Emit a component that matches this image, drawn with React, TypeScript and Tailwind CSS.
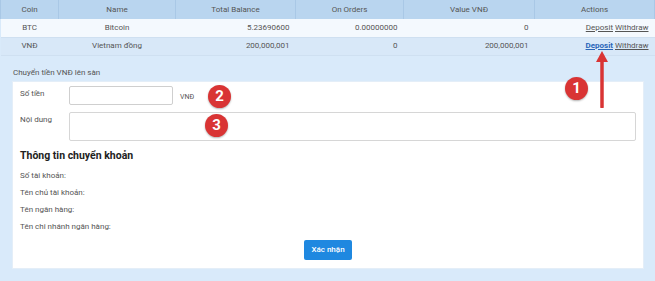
import { ReactNode } from 'react';

const cols = [
  { label: 'Coin', w: 'w-[58px]' },
  { label: 'Name', w: 'w-[117px]' },
  { label: 'Total Balance', w: 'w-[120px]' },
  { label: 'On Orders', w: 'w-[108px]' },
  { label: 'Value VNĐ', w: 'w-[131px]' },
  { label: 'Actions', w: '' },
];

const rows = [
  { coin: 'BTC', name: 'Bitcoin', total: '5.23690600', orders: '0.00000000', value: '0', active: false },
  { coin: 'VNĐ', name: 'Vietnam đồng', total: '200,000,001', orders: '0', value: '200,000,001', active: true },
];

const Badge = ({ n, className }: { n: number; className: string }) => (
  <div
    className={`absolute w-[23px] h-[23px] rounded-full bg-[#d93434] text-white text-[15px] font-bold flex items-center justify-center shadow-[0_1px_2px_rgba(0,0,0,0.3)] ${className}`}
  >
    {n}
  </div>
);

const Field = ({ label, children }: { label: string; children: ReactNode }) => (
  <div className="flex items-start">
    <div className="w-[49px] pt-[2px] text-[8px] text-[#555]">{label}</div>
    {children}
  </div>
);

export default function App() {
  return (
    <div className="relative w-[655px] h-[281px] bg-[#d9eafa] font-['Roboto',sans-serif] text-[#555] overflow-hidden">
      <table className="w-full border-collapse text-[8px] table-fixed">
        <thead>
          <tr className="bg-[#b9d5ef] h-[19px]">
            {cols.map((c) => (
              <th key={c.label} className={`${c.w} font-normal border-x border-[#a9c8e6] text-center`}>
                {c.label}
              </th>
            ))}
          </tr>
        </thead>
        <tbody>
          {rows.map((r) => (
            <tr key={r.coin} className={`h-[18px] border-b border-[#cfe0f1] ${r.active ? 'bg-[#d8e8f8]' : 'bg-[#f4f9fe]'}`}>
              <td className="text-center">{r.coin}</td>
              <td className="text-center">{r.name}</td>
              <td className="text-right pr-[6px]">{r.total}</td>
              <td className="text-right pr-[6px]">{r.orders}</td>
              <td className="text-right pr-[6px]">{r.value}</td>
              <td className="text-right pr-[6px]">
                <a className={`underline ${r.active ? 'text-[#2a66b8] font-bold' : 'text-[#555]'}`}>Deposit</a>{' '}
                <a className="underline text-[#555]">Withdraw</a>
              </td>
            </tr>
          ))}
        </tbody>
      </table>

      <div className="pl-[13px] pt-[11px] text-[8px] text-[#555]">Chuyển tiền VNĐ lên sàn</div>

      <div className="ml-[12px] mr-[11px] mt-[2px] h-[188px] bg-white border border-[#e4eef8] px-[7px] pt-[4px]">
        <Field label="Số tiền">
          <input className="w-[104px] h-[19px] border border-[#cfcfcf] rounded-[2px] outline-none" />
          <span className="ml-[7px] pt-[6px] text-[7px] text-[#555]">VNĐ</span>
        </Field>
        <div className="mt-[7px]">
          <Field label="Nội dung">
            <textarea className="w-[570px] h-[29px] border border-[#d6d6d6] rounded-[2px] resize-none outline-none" />
          </Field>
        </div>

        <div className="mt-[7px] text-[10.5px] leading-[16px] font-bold text-[#222]">Thông tin chuyển khoản</div>
        <div className="mt-[6px] flex flex-col gap-[5px] text-[8px] text-[#555]">
          <div>Số tài khoản:</div>
          <div>Tên chủ tài khoản:</div>
          <div>Tên ngân hàng:</div>
          <div>Tên chi nhánh ngân hàng:</div>
        </div>

        <div className="mt-[7px] flex justify-center">
          <button className="h-[20px] px-[7px] rounded-[2px] bg-[#1f88e0] text-white text-[8px] font-medium">Xác nhận</button>
        </div>
      </div>

      <Badge n={1} className="left-[565px] top-[77px]" />
      <Badge n={2} className="left-[208px] top-[85px]" />
      <Badge n={3} className="left-[205px] top-[114px]" />

      <svg className="absolute left-[595px] top-[50px]" width="14" height="58" viewBox="0 0 14 58">
        <path d="M7 57 L7 10" stroke="#d93434" strokeWidth="3.5" strokeLinecap="round" />
        <path d="M7 1 L13 12 L1 12 Z" fill="#d93434" />
      </svg>
    </div>
  );
}
